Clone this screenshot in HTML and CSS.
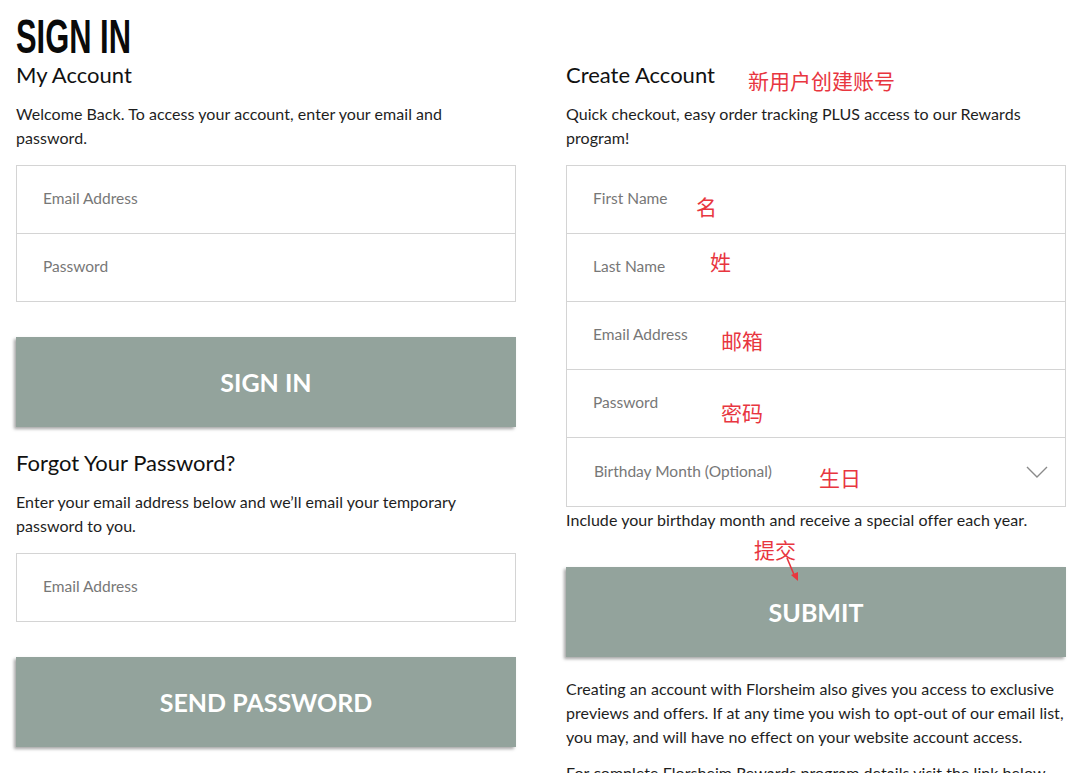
FILE: index.html
```html
<!DOCTYPE html>
<html>
<head>
  <title>Sign In</title>
  <link rel="stylesheet" href="styles.css">
</head>
<body>
  <h1 class="page-title">SIGN IN</h1>

  <div class="columns">
    <div class="column">
      <h2>My Account</h2>
      <p>Welcome Back. To access your account, enter your email and password.</p>
      <div class="fields">
        <div class="field"><input type="text" placeholder="Email Address"></div>
        <div class="field"><input type="password" placeholder="Password"></div>
      </div>
      <button class="btn">SIGN IN</button>

      <h2 class="forgot-title">Forgot Your Password?</h2>
      <p>Enter your email address below and we’ll email your temporary password to you.</p>
      <div class="fields">
        <div class="field"><input type="text" placeholder="Email Address"></div>
      </div>
      <button class="btn">SEND PASSWORD</button>
    </div>

    <div class="column">
      <h2 class="create-title">Create Account <span class="note note-create">新用户创建账号</span></h2>
      <p>Quick checkout, easy order tracking PLUS access to our Rewards program!</p>
      <div class="fields">
        <div class="field"><input type="text" placeholder="First Name"><span class="note note-first">名</span></div>
        <div class="field"><input type="text" placeholder="Last Name"><span class="note note-last">姓</span></div>
        <div class="field"><input type="text" placeholder="Email Address"><span class="note note-email">邮箱</span></div>
        <div class="field"><input type="password" placeholder="Password"><span class="note note-pass">密码</span></div>
        <div class="field field-select">
          <select>
            <option>Birthday Month (Optional)</option>
          </select>
          <svg class="chevron" width="22" height="13" viewBox="0 0 22 13"><path d="M1 1 L11 11 L21 1" fill="none" stroke="#8a8a8a" stroke-width="1.4"/></svg>
          <span class="note note-birthday">生日</span>
        </div>
      </div>
      <p class="hint">Include your birthday month and receive a special offer each year.</p>
      <div class="submit-wrap">
        <span class="note note-submit">提交</span>
        <svg class="arrow" width="16" height="26" viewBox="0 0 16 26">
          <path d="M2 1 L10 20" stroke="#e8363f" stroke-width="1.6" fill="none"/>
          <path d="M6 18 L13 24 L13 15 Z" fill="#e8363f"/>
        </svg>
        <button class="btn">SUBMIT</button>
      </div>
      <p class="info">Creating an account with Florsheim also gives you access to exclusive previews and offers. If at any time you wish to opt-out of our email list, you may, and will have no effect on your website account access.</p>
      <p class="info-more">For complete Florsheim Rewards program details visit the link below.</p>
    </div>
  </div>
</body>
</html>
```

FILE: styles.css
```css
body {
  margin: 0;
  padding: 0 20px 0 16px;
  font-family: Lato, "Noto Sans", Arial, sans-serif;
  color: #1e1e1e;
  background: white;
  overflow: hidden;
}
.page-title {
  margin: 12px 0 2px;
  height: 49px;
  font-family: "Liberation Sans Narrow", "Liberation Sans", Arial, sans-serif;
  font-size: 49px;
  line-height: 49px;
  font-weight: bold;
  color: #0a0a0a;
  transform: scaleX(0.63);
  transform-origin: left center;
}
.columns {
  display: grid;
  grid-template-columns: 500px 500px;
  column-gap: 50px;
}
h2 {
  margin: 0;
  font-size: 22px;
  line-height: 24px;
  font-weight: normal;
  color: #111;
}
.create-title {
  position: relative;
}
p {
  margin: 15px 0 0;
  font-size: 16px;
  line-height: 24px;
  letter-spacing: 0.05px;
}
.fields {
  margin-top: 15px;
  border: 1px solid #d4d4d4;
}
.field {
  position: relative;
  height: 67px;
  border-bottom: 1px solid #d4d4d4;
}
.field:last-child {
  border-bottom: none;
}
.field-select {
  height: 68px;
}
input, select {
  box-sizing: border-box;
  width: 100%;
  height: 100%;
  border: none;
  outline: none;
  padding: 0 0 3px 26px;
  font-family: Lato, "Noto Sans", Arial, sans-serif;
  font-size: 15.5px;
  color: #333;
  background: transparent;
}
input::placeholder {
  color: #777;
}
select {
  appearance: none;
  -webkit-appearance: none;
  padding-left: 27px;
  color: #777;
}
.chevron {
  position: absolute;
  right: 17px;
  top: 28px;
  pointer-events: none;
}
.btn {
  display: block;
  width: 100%;
  height: 90px;
  margin-top: 35px;
  border: none;
  background: #93a39c;
  color: white;
  font-family: Lato, "Noto Sans", Arial, sans-serif;
  font-size: 25px;
  font-weight: bold;
  box-shadow: -2px 2px 3px rgba(0,0,0,0.35);
  cursor: pointer;
}
.forgot-title {
  margin-top: 24px;
}
.hint {
  margin-top: 1px;
}
.submit-wrap {
  position: relative;
  padding-top: 35px;
}
.submit-wrap .btn {
  margin-top: 0;
}
.info {
  margin-top: 20px;
}
.info-more {
  margin-top: 12px;
}
.note {
  position: absolute;
  font-family: "Noto Sans CJK SC", sans-serif;
  font-size: 21px;
  line-height: 24px;
  color: #e8363f;
  white-space: nowrap;
}
.note-create { left: 182px; top: 5px; }
.note-first { left: 129px; top: 28px; }
.note-last { left: 143px; top: 15px; }
.note-email { left: 154px; top: 26px; }
.note-pass { left: 154px; top: 30px; }
.note-birthday { left: 252px; top: 27px; }
.note-submit { left: 188px; top: 5px; }
.arrow {
  position: absolute;
  left: 219px;
  top: 25px;
  z-index: 1;
}
```
